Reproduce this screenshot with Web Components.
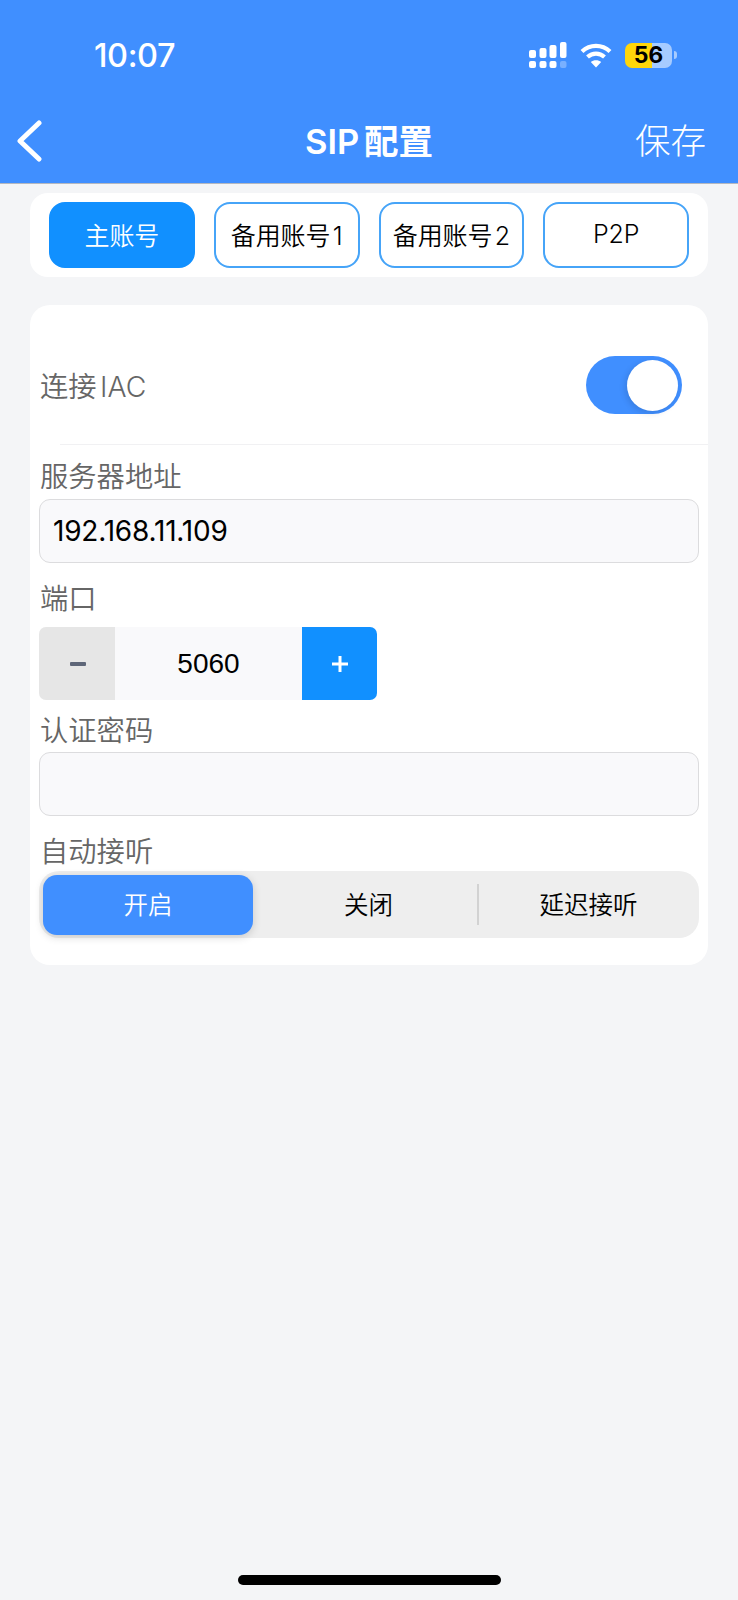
<!DOCTYPE html>
<html lang="zh">
<head>
<meta charset="utf-8">
<title>SIP配置</title>
<style>
  html, body { margin: 0; padding: 0; }
  body {
    width: 738px;
    min-height: 1600px;
    background: #f4f5f7;
    font-family: Inter, "Noto Sans CJK SC", sans-serif;
    display: flex;
    flex-direction: column;
  }
</style>
</head>
<body>
  <app-header title="SIP 配置" action="保存"></app-header>

  <tab-strip>
    <tab-button active>主账号</tab-button>
    <tab-button>备用账号 1</tab-button>
    <tab-button>备用账号 2</tab-button>
    <tab-button>P2P</tab-button>
  </tab-strip>

  <form-card>
    <switch-row label="连接 IAC" checked></switch-row>
    <form-field label="服务器地址" style="--top: 13px; --gap: 5px">
      <text-box value="192.168.11.109"></text-box>
    </form-field>
    <form-field label="端口" style="--top: 17px; --gap: 11px">
      <number-stepper value="5060"></number-stepper>
    </form-field>
    <form-field label="认证密码" style="--top: 11.5px; --gap: 4.5px">
      <text-box></text-box>
    </form-field>
    <form-field label="自动接听" style="--top: 17px; --gap: 2px">
      <segment-control>
        <segment-option active>开启</segment-option>
        <segment-option>关闭</segment-option>
        <segment-option divided>延迟接听</segment-option>
      </segment-control>
    </form-field>
  </form-card>

  <home-bar></home-bar>

<script>
  // small helper so every component gets an open shadow root the same way
  class ShadowElement extends HTMLElement {
    connectedCallback() {
      if (!this.shadowRoot) this.attachShadow({ mode: "open" });
      this.shadowRoot.innerHTML = this.render();
    }
  }

  class StatusBar extends ShadowElement {
    render() {
      return `
      <style>
        :host { display: flex; align-items: center; height: 110px; padding: 0 61px 0 94px; color: #fff; }
        .time { font-size: 32.500px; font-weight: 500; letter-spacing: -0.4px; }
        .icons { margin-left: auto; display: flex; align-items: center; gap: 13px; }
        svg { display: block; }
        .battery { position: relative; display: flex; width: 47px; height: 25px; }
        .level { width: 27px; background: #ffd60a; border-radius: 7px 0 0 7px; }
        .rest { flex: 1; background: #a6cbff; border-radius: 0 7px 7px 0; }
        .num { position: absolute; inset: 0; text-align: center; line-height: 25px; font-size: 23px; font-weight: 700; color: #000; }
        .tip { width: 3px; height: 8px; margin-left: 2px; background: #a6cbff; border-radius: 0 3px 3px 0; }
        .batt-wrap { display: flex; align-items: center; }
      </style>
      <span class="time">10:07</span>
      <div class="icons">
        <svg width="38" height="26" viewBox="0 0 38 26" fill="#fff">
          <rect x="0" y="8" width="7" height="8" rx="2"/>
          <rect x="10.500" y="6" width="7" height="10" rx="2"/>
          <rect x="20.500" y="3" width="7" height="13" rx="2"/>
          <rect x="31" y="0" width="6.500" height="16" rx="2"/>
          <rect x="0" y="19" width="7" height="7" rx="2"/>
          <rect x="10.500" y="19" width="7" height="7" rx="2"/>
          <rect x="20.500" y="19" width="7" height="7" rx="2"/>
          <rect x="31" y="19" width="6.500" height="7" rx="2" fill="#fff" opacity=".3"/>
        </svg>
        <svg width="32" height="25" viewBox="0 0 32 25" fill="none" stroke="#fff" stroke-width="4.200">
          <path d="M2 8.500 C10 1 22 1 30 8.500"/>
          <path d="M7.500 14 C12.500 9.500 19.500 9.500 24.500 14"/>
          <path d="M16 24.500 L10.800 19 C13.500 16.500 18.500 16.500 21.200 19 Z" fill="#fff" stroke="none"/>
        </svg>
        <div class="batt-wrap">
          <div class="battery">
            <div class="level"></div><div class="rest"></div>
            <div class="num">56</div>
          </div>
          <div class="tip"></div>
        </div>
      </div>
      `;
    }
  }
  customElements.define("status-bar", StatusBar);

  class AppHeader extends ShadowElement {
    render() {
      return `
      <style>
        :host { display: block; background: #408fff; border-bottom: 1px solid #b4b8c0; color: #fff; }
        nav { display: grid; grid-template-columns: 1fr auto 1fr; align-items: center; height: 73px; padding: 0 17px 12px; box-sizing: border-box; }
        .back { display: block; }
        h1 { margin: 0 0 4px; font-size: 34.500px; font-weight: 600; word-spacing: -4px; }
        .action { justify-self: end; margin: 0 15px 5px 0; font-size: 35.500px; font-weight: 300; }
      </style>
      <status-bar></status-bar>
      <nav>
        <svg class="back" width="25" height="42" viewBox="0 0 25 42" fill="none" stroke="#fff" stroke-width="5" stroke-linecap="round" stroke-linejoin="round">
          <path d="M22 3 L3 21 L22 39"/>
        </svg>
        <h1>${this.getAttribute("title")}</h1>
        <span class="action">${this.getAttribute("action")}</span>
      </nav>
      `;
    }
  }
  customElements.define("app-header", AppHeader);

  class TabStrip extends ShadowElement {
    render() {
      return `
      <style>
        :host { display: flex; gap: 19px; margin: 9px 30px 0; padding: 9px 19px; background: #fff; border-radius: 18px; }
      </style>
      <slot></slot>
      `;
    }
  }
  customElements.define("tab-strip", TabStrip);

  class TabButton extends ShadowElement {
    render() {
      return `
      <style>
        :host { flex: 1 1 0; display: flex; align-items: center; justify-content: center; box-sizing: border-box; height: 66px; padding-bottom: 2px; border: 2px solid #46a4f8; border-radius: 16px; font-size: 25px; font-weight: 350; word-spacing: -4.500px; letter-spacing: -0.1px; color: #000; white-space: nowrap; background: #fff; }
        :host([active]) { background: #1190ff; border-color: #1190ff; color: #fff; }
      </style>
      <slot></slot>
      `;
    }
  }
  customElements.define("tab-button", TabButton);

  class FormCard extends ShadowElement {
    render() {
      return `
      <style>
        :host { display: block; margin: 28px 30px 0; padding-bottom: 27px; background: #fff; border-radius: 20px; }
      </style>
      <slot></slot>
      `;
    }
  }
  customElements.define("form-card", FormCard);

  class SwitchRow extends ShadowElement {
    render() {
      return `
      <style>
        :host { display: block; }
        .row { display: flex; align-items: center; justify-content: space-between; height: 140px; padding: 20px 26px 0 10px; box-sizing: border-box; font-size: 28.300px; font-weight: 350; word-spacing: -4.500px; color: #666; }
        .row span { margin-bottom: 2px; }
        .track { position: relative; width: 96px; height: 58px; border-radius: 29px; background: #408fff; }
        .knob { position: absolute; top: 4px; right: 4px; width: 51px; height: 51px; border-radius: 50%; background: #fff; box-shadow: -2px 2px 6px rgba(0, 0, 0, .12); }
        .line { height: 1px; margin: -1px 0 0 30px; background: #f1f1f3; }
      </style>
      <div class="row">
        <span>${this.getAttribute("label")}</span>
        <div class="track"><div class="knob"></div></div>
      </div>
      <div class="line"></div>
      `;
    }
  }
  customElements.define("switch-row", SwitchRow);

  class FormField extends ShadowElement {
    render() {
      return `
      <style>
        :host { display: block; margin-top: var(--top, 0); padding: 0 9px; }
        label { display: block; height: 36px; line-height: 38px; margin-bottom: var(--gap, 0); padding-left: 1px; font-size: 28.300px; font-weight: 350; color: #666; }
      </style>
      <label>${this.getAttribute("label")}</label>
      <slot></slot>
      `;
    }
  }
  customElements.define("form-field", FormField);

  class TextBox extends ShadowElement {
    render() {
      return `
      <style>
        :host { display: flex; align-items: center; box-sizing: border-box; height: 64px; padding: 0 13px; background: #f9f9fb; border: 1.5px solid #dcdcde; border-radius: 11px; font-size: 28px; letter-spacing: -0.2px; color: #000; }
      </style>
      ${this.getAttribute("value") || ""}
      `;
    }
  }
  customElements.define("text-box", TextBox);

  class NumberStepper extends ShadowElement {
    render() {
      return `
      <style>
        :host { display: flex; width: 338px; height: 73px; background: #f9f9fb; border-radius: 7px; overflow: hidden; }
        .btn { width: 75px; display: flex; align-items: center; justify-content: center; }
        .minus { width: 76px; padding-left: 2px; box-sizing: border-box; background: #e6e6e6; }
        .plus { background: #1190ff; }
        .value { flex: 1; display: flex; align-items: center; justify-content: center; padding-top: 1px; font-family: "Liberation Sans", sans-serif; font-size: 28px; color: #000; }
        svg { display: block; }
      </style>
      <div class="btn minus">
        <svg width="16" height="4"><rect width="16" height="4" rx="1" fill="#5e6678"/></svg>
      </div>
      <div class="value">${this.getAttribute("value")}</div>
      <div class="btn plus">
        <svg width="16" height="16"><path d="M8 0 V16 M0 8 H16" stroke="#fff" stroke-width="3"/></svg>
      </div>
      `;
    }
  }
  customElements.define("number-stepper", NumberStepper);

  class SegmentControl extends ShadowElement {
    render() {
      return `
      <style>
        :host { display: grid; grid-template-columns: 220px 219px 1fr; height: 67px; background: #eeeeee; border-radius: 20px; }
      </style>
      <slot></slot>
      `;
    }
  }
  customElements.define("segment-control", SegmentControl);

  class SegmentOption extends ShadowElement {
    render() {
      return `
      <style>
        :host { position: relative; display: flex; align-items: center; justify-content: center; padding-bottom: 2px; font-size: 24.500px; font-weight: 350; color: #000; }
        :host([active]) { margin: 3.500px 6px 3.500px 4px; background: #408fff; color: #fff; border-radius: 14px; box-shadow: 0 2px 8px rgba(0, 0, 0, .16); }
        :host([divided])::before { content: ""; position: absolute; left: -1px; top: 13px; bottom: 13px; width: 1.500px; background: #d2d2d2; }
      </style>
      <slot></slot>
      `;
    }
  }
  customElements.define("segment-option", SegmentOption);

  class HomeBar extends ShadowElement {
    render() {
      return `
      <style>
        :host { display: block; width: 263px; height: 10px; margin: auto auto 15px; background: #000; border-radius: 5px; }
      </style>
      `;
    }
  }
  customElements.define("home-bar", HomeBar);
</script>
</body>
</html>
